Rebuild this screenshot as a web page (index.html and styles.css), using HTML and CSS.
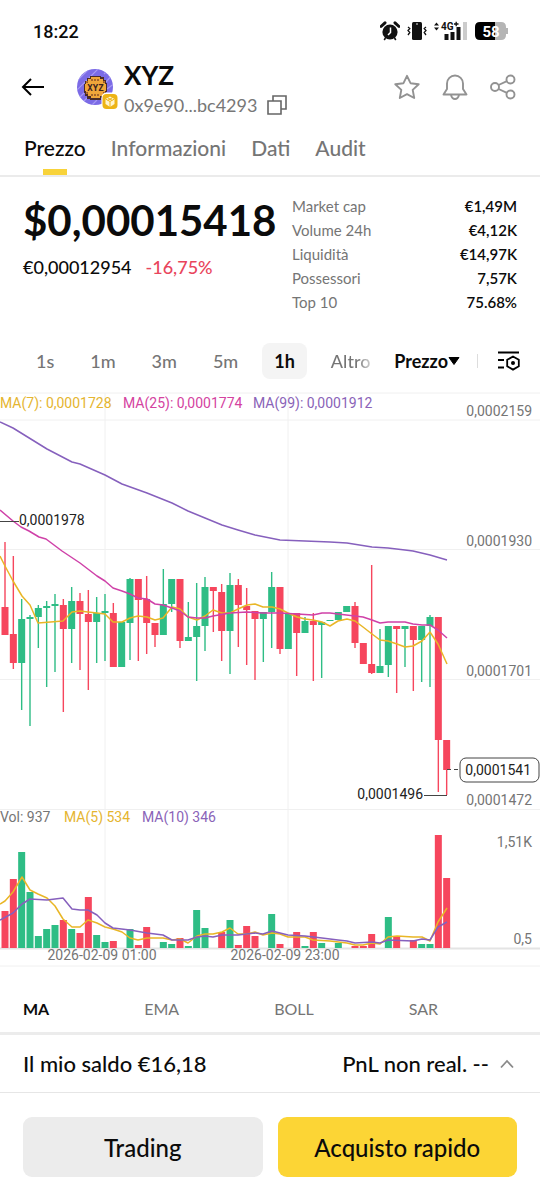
FILE: index.html
```html
<!DOCTYPE html>
<html lang="it">
<head>
<meta charset="utf-8">
<meta name="viewport" content="width=device-width, initial-scale=1">
<title>XYZ</title>
<link rel="stylesheet" href="styles.css">
</head>
<body>
<div class="status">
  <span class="clock">18:22</span>
  <div class="status-icons">
    <svg width="20" height="20" viewBox="0 0 20 20" aria-hidden="true"><circle cx="10" cy="11" r="7.6" fill="#111"/><path d="M1 5.500 5 1.800M19 5.500 15 1.800" stroke="#111" stroke-width="3" stroke-linecap="round"/><path d="m5.500 17-1.300 2M14.500 17l1.300 2" stroke="#111" stroke-width="1.600"/><path d="M10.500 6.500V11.500L8 14" stroke="#fff" stroke-width="1.500" fill="none"/></svg>
    <svg width="20" height="20" viewBox="0 0 20 20" aria-hidden="true"><rect x="5" y="1" width="10" height="18" rx="1.500" fill="#111"/><circle cx="10" cy="3" r=".8" fill="#fff"/><path d="m1 6 1.800 1.500L1 9.500l1.800 2L1 14M19 6l-1.800 1.500L19 9.500l-1.800 2L19 14" fill="none" stroke="#111" stroke-width="1.300"/></svg>
    <svg width="34" height="20" viewBox="0 0 34 20" aria-hidden="true"><path d="M0 4.500 2.500 1.500 5 4.500zM0 6.500 2.500 9.500 5 6.500z" fill="#111"/><text x="7" y="9" class="net">4G</text><path d="M20 3h4.500M22.200.8v4.500" stroke="#111" stroke-width="1.300"/><path d="M12.500 19v-6M18.500 19v-8M24.500 19V6" stroke="#111" stroke-width="4"/><path d="M31 19V1" stroke="#ccc" stroke-width="4"/></svg>
    <svg width="34" height="18" viewBox="0 0 34 18" aria-hidden="true"><path d="M5 0H20V18H5Q0 18 0 13V5Q0 0 5 0" fill="#000"/><path d="M20 0h6q5 0 5 5v1h2v6h-2v1q0 5-5 5h-6z" fill="#b5b5b5"/><text x="16" y="14.500" class="charge">58</text></svg>
  </div>
</div>

<header class="header">
  <button class="icon-btn back" aria-label="Indietro"><svg width="24" height="20" viewBox="0 0 24 20"><path d="M23 10H2M10 2 2 10l8 8" fill="none" stroke="#000" stroke-width="2"/></svg></button>
  <svg class="token" width="44" height="42" viewBox="0 0 44 42" aria-hidden="true">
    <defs><clipPath id="disc"><circle cx="18" cy="19" r="18"/></clipPath></defs>
    <circle cx="18" cy="19" r="18" fill="#7b6be6"/>
    <g clip-path="url(#disc)" stroke="#a699f3" stroke-width="1.200"><path d="M-2 15 14-1M-1 23 23-1M1 31 8 24M27 6l6-6M4 36l7-7M29 14l8-9M14 38l6-6M30 21l8-6M0 8l7-8"/></g>
    <path d="M13 8h11v1h3v3h2v3h1v9h-1v3h-2v3h-3v2H13v-1h-3v-3H8v-3H7v-9h1v-3h2v-3h3z" fill="#4a2c29"/>
    <path d="M14 9h9v2h3v2h2v3h1v7h-1v3h-2v2h-3v2h-9v-2h-3v-2H9v-3H8v-7h1v-3h2v-2h3z" fill="#f0a63a"/>
    <path d="M14 12h9M14 27h9M10 15v-1h2M27 15v-1h-2M10 24v1h2M27 24v1h-2" stroke="#8d5227" stroke-width="1.500" stroke-dasharray="2 1" fill="none"/>
    <text x="18.500" y="22.500" class="coin-text">XYZ</text>
    <rect x="24.500" y="24.500" width="18" height="18" rx="5" fill="#fff"/>
    <rect x="25.500" y="26" width="15" height="15" rx="4" fill="#edb416"/>
    <path d="m33 28.500 4.500 2.500v5L33 39l-4.500-3v-5z" fill="#fff5cf"/><path d="m28.500 31 4.500 2.500 4.500-2.500M33 33.500V39M30.700 29.800l4.500 2.500M35.300 29.800l-4.500 2.500" stroke="#edb416" fill="none"/>
  </svg>
  <div class="identity">
    <h1 class="symbol">XYZ</h1>
    <div class="address"><span>0x9e90...bc4293</span>
      <button class="icon-btn" aria-label="Copia indirizzo"><svg width="20" height="20" viewBox="0 0 20 20"><path d="M6 6V1h13v13h-5M1 6h13v13H1z" fill="none" stroke="#666" stroke-width="1.600"/></svg></button>
    </div>
  </div>
  <div class="actions">
    <button class="icon-btn" aria-label="Preferiti"><svg width="26" height="28" viewBox="0 0 26 28"><path d="m13 2.800 3.500 7.400 8.200 1-6 5.700 1.500 8.100-7.200-3.900L5.800 25l1.500-8.100-6-5.700 8.200-1z" fill="none" stroke="#929292" stroke-width="1.900" stroke-linejoin="round"/></svg></button>
    <button class="icon-btn" aria-label="Avvisi"><svg width="26" height="28" viewBox="0 0 26 28"><path d="M5 16v-5.500a8 8 0 0 1 16 0V16l3.500 5.500h-23zM9 22q1 4 4 4t4-4" fill="none" stroke="#929292" stroke-width="1.900" stroke-linejoin="round"/></svg></button>
    <button class="icon-btn" aria-label="Condividi"><svg width="26" height="28" viewBox="0 0 26 28"><g fill="none" stroke="#929292" stroke-width="1.900"><circle cx="5" cy="14" r="4"/><circle cx="20.500" cy="6.500" r="4"/><circle cx="20.500" cy="21.500" r="4"/><path d="m8.600 12 8.300-3.800M8.600 16l8.300 3.800"/></g></svg></button>
  </div>
</header>

<nav class="tabs">
  <a class="tab active" href="#prezzo">Prezzo</a>
  <a class="tab" href="#info">Informazioni</a>
  <a class="tab" href="#dati">Dati</a>
  <a class="tab" href="#audit">Audit</a>
</nav>

<main>
  <section class="summary" id="prezzo">
    <div class="quote">
      <div class="price">$0,00015418</div>
      <div class="sub"><span>€0,00012954</span><span class="down">-16,75%</span></div>
    </div>
    <dl class="stats">
      <div class="stat"><dt>Market cap</dt><dd>€1,49M</dd></div>
      <div class="stat"><dt>Volume 24h</dt><dd>€4,12K</dd></div>
      <div class="stat"><dt>Liquidità</dt><dd>€14,97K</dd></div>
      <div class="stat"><dt>Possessori</dt><dd>7,57K</dd></div>
      <div class="stat"><dt>Top 10</dt><dd>75.68%</dd></div>
    </dl>
  </section>

  <div class="toolbar">
    <div class="intervals">
      <button class="chip">1s</button>
      <button class="chip">1m</button>
      <button class="chip">3m</button>
      <button class="chip">5m</button>
      <button class="chip selected">1h</button>
      <button class="chip fade">Altro</button>
    </div>
    <button class="mode">Prezzo<svg width="12" height="8" viewBox="0 0 12 8" aria-hidden="true"><path d="M1 .5h10L6 7.500z" stroke="#000" stroke-linejoin="round"/></svg></button>
    <span class="divider"></span>
    <button class="icon-btn" aria-label="Impostazioni grafico"><svg width="24" height="22" viewBox="0 0 24 22"><g fill="none" stroke="#000" stroke-width="1.800"><path d="M2 2.500h21M2 10h6M2 17.500h6M17 6.500l5.800 3.300v6.500L17 19.600l-5.800-3.300V9.800z"/></g><circle cx="17" cy="13" r="2"/></svg></button>
  </div>

  <svg class="chart" viewBox="0 392 540 575" role="img" aria-label="Grafico a candele XYZ">
    <g class="grid">
      <path d="M0 393H540M0 420H540M0 549.500H540M0 679.500H540M0 809.500H540M0 966H540M105 393V948M288 393V948"/>
      <path class="base" d="M0 948.500H540"/>
    </g>
    <g id="series"></g>
    <g class="marker">
      <path d="M0 521.500H19M424 795.500H447"/>
      <path stroke-dasharray="4 3" d="M447 769.500H460"/>
      <rect x="460" y="758" width="79" height="24" rx="6"/>
    </g>
    <g class="labels">
      <text class="ma7" x="0" y="408">MA(7): 0,0001728</text>
      <text class="ma25" x="123" y="408">MA(25): 0,0001774</text>
      <text class="ma99" x="253" y="408">MA(99): 0,0001912</text>
      <text class="dark" x="19" y="525">0,0001978</text>
      <text class="dark end" x="423" y="799">0,0001496</text>
      <text class="dark end" x="531" y="775">0,0001541</text>
      <text class="end" x="532" y="416">0,0002159</text>
      <text class="end" x="532" y="546">0,0001930</text>
      <text class="end" x="532" y="676">0,0001701</text>
      <text class="end" x="532" y="805">0,0001472</text>
      <text x="0" y="822">Vol: 937</text>
      <text class="ma7" x="64" y="822">MA(5) 534</text>
      <text class="ma99" x="142" y="822">MA(10) 346</text>
      <text class="end" x="532" y="847">1,51K</text>
      <text class="end" x="532" y="944">0,5</text>
      <text class="mid" x="102" y="960">2026-02-09 01:00</text>
      <text class="mid" x="285" y="960">2026-02-09 23:00</text>
    </g>
  </svg>

  <div class="indicators">
    <button class="ind on">MA</button>
    <button class="ind">EMA</button>
    <button class="ind">BOLL</button>
    <button class="ind">SAR</button>
  </div>
</main>

<footer class="footer">
  <div class="balance">
    <span>Il mio saldo €16,18</span>
    <button class="pnl">PnL non real. --<svg width="14" height="10" viewBox="0 0 14 10" aria-hidden="true"><path d="m1 8.500 6-6.500 6 6.500" fill="none" stroke="#8a8a8a" stroke-width="1.800"/></svg></button>
  </div>
  <div class="cta">
    <button class="btn">Trading</button>
    <button class="btn primary">Acquisto rapido</button>
  </div>
</footer>
<script src="chart.js"></script>
</body>
</html>
```
FILE: styles.css
```css
* { box-sizing: border-box; }
body { margin: 0; background: #fff; color: #0b0b0b; font-family: Lato, "Open Sans", sans-serif; }
button { font: inherit; color: inherit; background: none; border: 0; padding: 0; margin: 0; cursor: pointer; white-space: nowrap; }
svg { display: block; flex: none; }
.icon-btn { display: flex; }

.status { display: flex; justify-content: space-between; align-items: center; height: 60px; padding: 2px 31px 0 33px; }
.clock { font: 500 18px Roboto, sans-serif; }
.status-icons { display: flex; align-items: center; gap: 7px; }
.net { font: 700 10px Roboto, sans-serif; fill: #111; }
.charge { font: 700 15px Roboto, sans-serif; fill: #fff; text-anchor: middle; }

.header { display: flex; align-items: center; height: 54px; padding: 0 24px 0 21px; }
.token { margin-left: 32px; margin-top: 4px; }
.coin-text { font: 700 9px "DejaVu Sans Mono", monospace; fill: #3b2220; text-anchor: middle; }
.identity { margin: 5px 0 0 3px; }
.symbol { margin: 0; font-size: 26px; line-height: 30px; font-weight: 700; }
.address { display: flex; align-items: center; gap: 10px; font-size: 18px; line-height: 30px; color: #777; }
.actions { display: flex; gap: 22px; margin-left: auto; }

.tabs { display: flex; gap: 25px; height: 63px; padding: 0 24px; border-bottom: 2px solid #ebebeb; }
.tab { position: relative; color: #757575; font-size: 21px; line-height: 68px; font-weight: 500; text-decoration: none; }
.tab.active { color: #0b0b0b; }
.tab.active::after { content: ""; position: absolute; left: 50%; bottom: 0; width: 24px; height: 6px; margin-left: -12px; background: #f8d33a; }

.summary { display: flex; justify-content: space-between; padding: 17px 23px 0; }
.price { font-size: 42px; line-height: 52px; font-weight: 700; }
.sub { display: flex; gap: 14px; margin-top: 8px; font-size: 18px; line-height: 26px; font-weight: 500; }
.down { color: #e9455c; }
.stats { flex: 0 1 225px; margin: 0; font-size: 15px; line-height: 24px; }
.stat { display: flex; justify-content: space-between; }
.stat dt { color: #757575; }
.stat dd { margin: 0; font-weight: 600; }

.toolbar { display: flex; align-items: center; height: 78px; padding: 16px 20px 0 24px; }
.intervals { display: flex; gap: 12px; }
.chip { height: 36px; padding: 0 12px; border-radius: 8px; font-size: 18px; color: #757575; font-weight: 500; }
.chip.selected { background: #f4f4f4; color: #0b0b0b; font-weight: 700; }
.chip.fade { background: linear-gradient(90deg, #757575 60%, #ddd 85%); background-clip: text; -webkit-background-clip: text; color: transparent; }
.mode { display: flex; align-items: center; margin-left: auto; font-size: 18px; font-weight: 700; }
.divider { width: 1px; height: 14px; margin: 0 18px 0 17px; background: #ddd; }

.chart { width: 100%; height: auto; }
.grid path { stroke: #f0f0f0; fill: none; }
.grid .base { stroke: #e4e4e4; stroke-width: 2; }
.marker path, .marker rect { stroke: #444; fill: none; }
.marker rect { fill: #fff; }
.labels text { font: 400 14px Roboto, sans-serif; fill: #757575; }
.labels .dark { fill: #222; }
.labels .end { text-anchor: end; }
.labels .mid { text-anchor: middle; }
.labels .ma7 { fill: #e5b52f; }
.labels .ma25 { fill: #d4439f; }
.labels .ma99 { fill: #8a63b8; }
.up-bar { fill: #2ebd85; }
.down-bar { fill: #f6465d; }
.line { fill: none; stroke-width: 1.5; stroke-linejoin: round; }
.line.yellow { stroke: #e9b626; }
.line.pink { stroke: #cf41a8; }
.line.violet { stroke: #8660bd; }

.indicators { display: flex; gap: 95px; padding: 30px 23px 0; height: 68px; border-bottom: 3px solid #ececec; }
.ind { font-size: 16px; line-height: 24px; height: 24px; color: #757575; }
.ind.on { color: #0b0b0b; font-weight: 700; }

.balance { display: flex; justify-content: space-between; align-items: center; height: 58px; padding: 0 26px 0 23px; border-bottom: 1px solid #e6e6e6; font-size: 22px; font-weight: 500; }
.pnl { display: flex; align-items: center; gap: 11px; }
.cta { display: flex; gap: 15px; padding: 24px 23px; }
.btn { flex: 1; height: 60px; border-radius: 9px; background: #ececec; font-size: 24px; font-weight: 500; }
.primary { background: #fcd535; }
```
FILE: chart.js
```js
const STEP = 25 / 3;
const FIRST = 5;
const BASE = 948;

// direction, body top, body bottom, wick top, wick bottom, volume bar top
const candles = [
  ['d',607,635,542,635,911],['d',634,663,556,669,879],['u',619,663,599,710,852],['u',617,619,615,726,892],
  ['u',608,617,605,648,936],['u',606,608,601,687,929],['u',604,606,594,672,925],['d',605,629,599,712,920],
  ['u',601,629,587,663,929],['d',601,614,593,670,933],['d',614,622,590,690,897],['u',613,622,597,663,935],
  ['u',611,613,594,661,942],['d',613,667,603,667,941],['u',622,667,622,667,948],['u',579,623,578,660,929],
  ['d',579,600,579,661,945],['d',599,623,576,654,927],['d',623,635,623,647,948],['u',604,635,569,635,942],
  ['u',579,604,579,612,944],['d',579,641,579,648,938],['u',637,641,602,641,946],['u',626,637,583,681,910],
  ['u',587,626,577,651,928],['d',587,591,587,632,948],['d',592,631,584,661,932],['u',585,631,573,674,920],
  ['d',585,605,579,647,945],['d',606,610,588,665,926],['d',611,619,611,680,936],['u',612,619,612,662,948],
  ['u',587,612,572,648,914],['d',587,649,587,654,944],['u',614,649,614,649,948],['d',613,633,613,676,932],
  ['u',621,633,617,633,946],['d',621,625,613,681,932],['u',622,625,622,678,943],['u',620,621,620,621,948],
  ['u',612,620,612,620,943],['u',606,612,606,612,948],['d',606,643,602,648,946],['d',643,664,643,664,946],
  ['d',664,673,565,674,934],['u',666,673,629,673,948],['u',626,665,626,677,917],['d',626,629,626,693,936],
  ['u',626,629,626,667,948],['d',626,640,626,691,940],['u',626,640,626,682,944],['u',617,626,615,687,944],
  ['d',617,740,617,792,835],['d',740,770,740,795,878]
];

const lines = [
  ['violet', '0,422 13,428 47,449 72,462 80,464 105,475 122,484 147,493 172,503 188,511 205,518 222,525 238,530 255,535 280,540 305,541 330,542 347,543 372,547 388,548 405,550 413,551 430,555 447,560'],
  ['yellow', '0,556 5,566 13,581 22,596 30,605 38,623 63,621 72,612 80,611 88,612 97,613 105,614 113,622 122,622 130,618 138,616 147,617 155,620 163,618 172,607 180,609 188,617 197,620 205,616 213,610 222,613 230,613 238,609 247,605 255,604 263,607 272,607 280,609 288,613 297,617 305,619 313,620 322,622 330,626 338,621 347,619 355,621 363,627 372,634 380,640 388,641 397,644 405,647 413,646 422,641 430,632 438,644 447,664'],
  ['pink', '0,510 13,521 21,527 29,531 39,537 46,539 62,551 80,563 97,576 105,581 113,588 122,591 130,594 138,598 147,599 155,604 163,605 172,608 180,611 188,617 197,618 205,618 213,616 230,613 247,612 263,613 280,613 297,614 313,615 322,613 330,613 338,614 363,617 372,620 380,623 388,622 405,622 413,624 422,625 430,625 438,630 447,638'],
  ['yellow', '0,904 5,901 13,892 22,877 30,890 38,894 47,898 55,906 63,919 72,927 80,927 88,920 97,923 105,927 113,929 122,932 130,938 138,940 147,938 163,938 172,940 180,939 188,943 197,936 205,934 213,934 222,932 230,928 238,934 247,934 255,932 263,935 272,933 280,934 288,937 305,937 313,940 330,941 347,943 355,945 363,945 372,943 380,944 388,937 397,936 413,937 422,937 430,941 438,922 447,908'],
  ['violet', '0,920 13,913 22,904 30,899 47,900 55,899 63,898 72,909 80,910 88,910 97,915 105,923 113,928 130,930 147,933 163,935 172,940 188,940 197,937 205,936 213,937 222,935 238,935 255,933 263,934 272,931 288,935 305,936 322,938 338,940 347,941 355,943 372,942 380,943 388,940 413,941 422,939 430,940 438,927 447,922']
];

const series = document.getElementById('series');

function add(name, attrs) {
  const node = document.createElementNS('http://www.w3.org/2000/svg', name);
  for (const key in attrs) node.setAttribute(key, attrs[key]);
  series.appendChild(node);
}

candles.forEach(([dir, top, bottom, high, low, volume], i) => {
  const x = FIRST + i * STEP;
  const cls = dir === 'u' ? 'up-bar' : 'down-bar';
  add('rect', { class: cls, x: x - 0.7, y: high, width: 1.4, height: low - high });
  add('rect', { class: cls, x: x - 3.5, y: top, width: 7, height: bottom - top });
  add('rect', { class: cls, x: x - 3.5, y: volume, width: 7, height: BASE - volume });
});

lines.forEach(([color, points]) => add('polyline', { class: 'line ' + color, points }));
```
